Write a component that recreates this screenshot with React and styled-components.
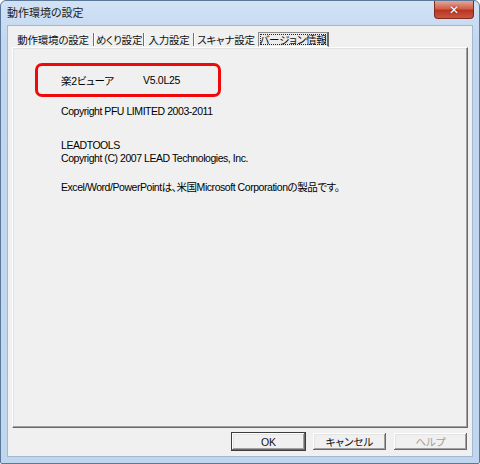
import React from "react";
import styled, { createGlobalStyle } from "styled-components";

const GlobalStyle = createGlobalStyle`
  html, body {
    margin: 0;
    padding: 0;
    background: #ffffff;
  }
  * {
    box-sizing: border-box;
  }
`;

const UI_FONT = `"Liberation Sans", "Noto Sans CJK JP", sans-serif`;

const Window = styled.div`
  width: 480px;
  height: 464px;
  display: flex;
  flex-direction: column;
  padding: 0 6px 6px 6px;
  border: 1px solid #5b7799;
  border-radius: 6px 6px 2px 2px;
  background: linear-gradient(#d2e2f5, #c2d7ef 40px, #c0d5ee);
  font-family: ${UI_FONT};
  color: #000;
`;

const TitleBar = styled.div`
  height: 24px;
  display: flex;
  align-items: flex-start;
`;

const Title = styled.div`
  font-size: 11px;
  line-height: 11px;
  padding-top: 7px;
  font-feature-settings: "palt";
  color: #1a1a1a;
`;

const CloseButton = styled.div`
  margin-left: auto;
  margin-right: -1px;
  width: 40px;
  height: 18px;
  display: flex;
  align-items: center;
  justify-content: center;
  border: 1px solid #7d2a1f;
  border-top: none;
  border-radius: 0 0 4px 4px;
  background: linear-gradient(#e6a597, #d0604a 45%, #b93522 55%, #c9563f);
  color: #fff;
  font-family: "DejaVu Sans", sans-serif;
  font-weight: bold;
  font-size: 12px;
  text-shadow: 0 0 2px #6b1b10;
`;

const Client = styled.div`
  flex: 1;
  display: flex;
  flex-direction: column;
  background: #f0f0f0;
  border: 1px solid #a4b7cf;
  padding: 5px 4px 5px 4px;
`;

const TabStrip = styled.div`
  display: flex;
  align-items: center;
  height: 16px;
  padding-left: 2px;
`;

const Tab = styled.div`
  width: ${(p) => p.$w}px;
  height: 15px;
  display: flex;
  align-items: center;
  justify-content: center;
  font-size: 10.5px;
  font-feature-settings: "palt";
  letter-spacing: -0.2px;
  white-space: nowrap;
  color: #111;
  position: relative;
  ${(p) =>
    p.$active &&
    `
    border-top: 1px solid #8c8c8c;
    border-left: 1px solid #8c8c8c;
    border-right: 2px solid #6a6a6a;
    border-bottom: 1px solid #ffffff;
    background: #ececec;
    &::after {
      content: "";
      position: absolute;
      inset: 1px 1px 1px 1px;
      border: 1px dotted #222;
    }
  `}
`;

const Sep = styled.div`
  width: 2px;
  height: 13px;
  border-left: 1px solid #707070;
  border-right: 1px solid #ffffff;
  margin: 0 1px;
`;

const TabPanel = styled.div`
  flex: 1;
  display: flex;
  flex-direction: column;
  padding: 15px 0 0 48px;
  border-top: 1px solid #ffffff;
  border-left: 1px solid #ffffff;
  border-right: 1px solid #696969;
  border-bottom: 1px solid #696969;
  box-shadow: inset -1px -1px 0 #a0a0a0, inset 1px 1px 0 #e3e3e3;
  font-size: 10.5px;
  font-feature-settings: "palt";
`;

const Highlight = styled.div`
  width: 186px;
  height: 34px;
  margin-left: -26px;
  padding-left: 23px;
  display: flex;
  align-items: center;
  border: 3px solid #ee0a0a;
  border-radius: 7px;
  letter-spacing: -0.3px;
`;

const Name = styled.span`
  width: 82px;
`;

const Line = styled.div`
  line-height: 13px;
  margin-top: ${(p) => p.$gap || 0}px;
  white-space: nowrap;
  letter-spacing: -0.45px;
`;

const ButtonRow = styled.div`
  display: flex;
  justify-content: flex-end;
  gap: 6px;
  margin-top: 4px;
`;

const Button = styled.div`
  width: 75px;
  height: 19px;
  display: flex;
  align-items: center;
  justify-content: center;
  font-size: 10.5px;
  font-feature-settings: "palt";
  background: #f0f0f0;
  color: ${(p) => (p.$disabled ? "#a0a0a0" : "#111")};
  border: 1px solid ${(p) => (p.$default ? "#3c3c3c" : "#f0f0f0")};
  box-shadow: inset -1px -1px 0 #696969, inset 1px 1px 0 #ffffff,
    inset -2px -2px 0 #a0a0a0, inset 2px 2px 0 #e3e3e3;
`;

const tabs = [
  { label: "動作環境の設定", w: 78 },
  { label: "めくり設定", w: 46 },
  { label: "入力設定", w: 46 },
  { label: "スキャナ設定", w: 60 },
];

export default function App() {
  return (
    <>
      <GlobalStyle />
      <Window>
        <TitleBar>
          <Title>動作環境の設定</Title>
          <CloseButton>✕</CloseButton>
        </TitleBar>
        <Client>
          <TabStrip>
            {tabs.map((t, i) => (
              <React.Fragment key={t.label}>
                <Tab $w={t.w}>{t.label}</Tab>
                {i < tabs.length - 1 && <Sep />}
              </React.Fragment>
            ))}
            <Tab $w={71} $active style={{ marginLeft: 2 }}>
              バージョン情報
            </Tab>
          </TabStrip>
          <TabPanel>
            <Highlight>
              <Name>楽2ビューア</Name>
              <span>V5.0L25</span>
            </Highlight>
            <Line $gap={8}>Copyright PFU LIMITED 2003-2011</Line>
            <Line $gap={21}>LEADTOOLS</Line>
            <Line>Copyright (C) 2007 LEAD Technologies, Inc.</Line>
            <Line $gap={16}>
              Excel/Word/PowerPointは、米国Microsoft Corporationの製品です。
            </Line>
          </TabPanel>
          <ButtonRow>
            <Button $default>OK</Button>
            <Button>キャンセル</Button>
            <Button $disabled>ヘルプ</Button>
          </ButtonRow>
        </Client>
      </Window>
    </>
  );
}
